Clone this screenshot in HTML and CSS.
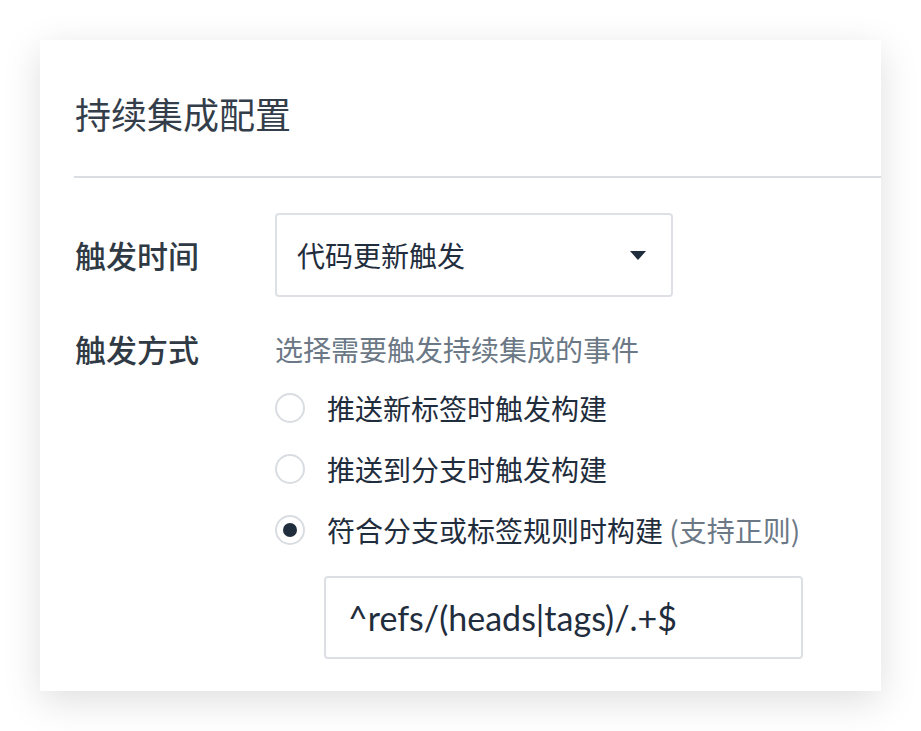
FILE: index.html
```html
<!DOCTYPE html>
<html lang="zh-CN">
<head>
<meta charset="utf-8">
<title>持续集成配置</title>
<link rel="stylesheet" href="styles.css">
</head>
<body>
<div class="card">
  <div class="card-header">
    <h1 class="title">持续集成配置</h1>
  </div>
  <div class="divider"></div>
  <div class="card-body">
    <div class="form-row">
      <div class="label label-select">触发时间</div>
      <div class="control">
        <div class="select">
          <span class="select-value">代码更新触发</span>
          <svg class="caret" width="16" height="9" viewBox="0 0 16 9"><path d="M0 0 H16 L8 9 Z" fill="#1f2d3d"/></svg>
        </div>
      </div>
    </div>
    <div class="form-row form-row-2">
      <div class="label">触发方式</div>
      <div class="control">
        <div class="hint">选择需要触发持续集成的事件</div>
        <div class="options">
          <div class="option"><span class="radio"></span><span class="option-text">推送新标签时触发构建</span></div>
          <div class="option"><span class="radio"></span><span class="option-text">推送到分支时触发构建</span></div>
          <div class="option"><span class="radio checked"></span><span class="option-text">符合分支或标签规则时构建 <span class="muted">(支持正则)</span></span></div>
        </div>
        <div class="input">^refs/(heads|tags)/.+$</div>
      </div>
    </div>
  </div>
</div>
</body>
</html>
```
FILE: styles.css
```css
* { box-sizing: border-box; }
html, body { margin: 0; padding: 0; background: #ffffff; }
body {
  padding: 40px 40px 40px 40px;
  font-family: "Noto Sans CJK SC", "Noto Sans", sans-serif;
  color: #1f2d3d;
}
.card {
  width: 841px;
  height: 651px;
  background: #ffffff;
  box-shadow: 0 10px 36px rgba(0, 0, 0, 0.13);
}
.card-header {
  padding: 37px 35px 27px 35px;
}
.title {
  margin: 0;
  font-size: 36px;
  line-height: 72px;
  font-weight: 400;
  color: #343e4a;
}
.divider {
  margin-left: 34px;
  height: 2px;
  background: #dadee3;
}
.card-body {
  padding: 35px 0 0 35px;
}
.form-row {
  display: grid;
  grid-template-columns: 200px 1fr;
}
.form-row-2 {
  margin-top: 32px;
}
.label {
  font-size: 31px;
  line-height: 40px;
  font-weight: 500;
  color: #2f3a45;
}
.label-select {
  line-height: 84px;
}
.select {
  width: 398px;
  height: 84px;
  border: 2px solid #dde1e6;
  border-radius: 4px;
  display: flex;
  align-items: center;
  justify-content: space-between;
  padding: 0 25px 0 20px;
}
.select-value {
  font-size: 28px;
  line-height: 40px;
  color: #1f2d3d;
}
.caret { display: block; }
.hint {
  font-size: 28px;
  line-height: 40px;
  color: #6b7886;
}
.options {
  display: flex;
  flex-direction: column;
  gap: 21px;
  margin-top: 19px;
}
.option {
  display: flex;
  align-items: center;
  height: 40px;
}
.radio {
  width: 30px;
  height: 30px;
  border: 2px solid #d9dde2;
  border-radius: 50%;
  display: flex;
  align-items: center;
  justify-content: center;
  flex: none;
}
.radio.checked::after {
  content: "";
  width: 14px;
  height: 14px;
  border-radius: 50%;
  background: #1f2d3d;
}
.option-text {
  margin-left: 22px;
  font-size: 28px;
  line-height: 40px;
  color: #1f2d3d;
}
.muted { color: #6b7886; }
.input {
  margin-top: 26px;
  margin-left: 49px;
  width: 479px;
  height: 83px;
  border: 2px solid #dce0e5;
  border-radius: 4px;
  padding: 0 22px;
  display: flex;
  align-items: center;
  font-family: "Lato", "Liberation Sans", sans-serif;
  font-size: 34px;
  color: #1f2d3d;
}
```
